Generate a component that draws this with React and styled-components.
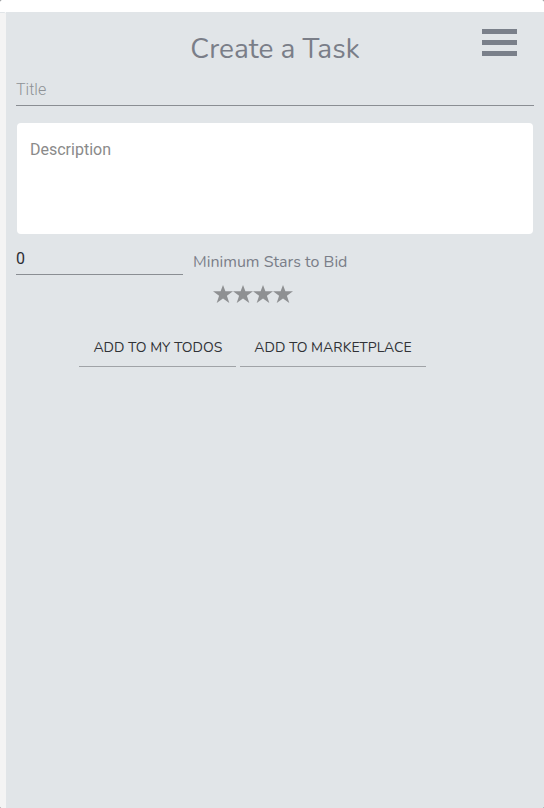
import React, { useState } from "react";
import styled, { createGlobalStyle } from "styled-components";

const GlobalStyle = createGlobalStyle`
  *, *::before, *::after { box-sizing: border-box; }
  body { margin: 0; background: #777b7f; }
`;

const uiFont = `Nunito, Lato, sans-serif`;
const fieldFont = `Roboto, sans-serif`;

const Screen = styled.div`
  display: flex;
  min-height: 100vh;
  padding-top: 12px;
  overflow: hidden;
  border-radius: 2px;
  background: #ffffff;
  font-family: ${uiFont};
  color: #7a7e88;
`;

const Rail = styled.div`
  flex: 0 0 6px;
  border-top: 1px solid #e1e5e8;
  border-top-right-radius: 2px;
  background: #f4f4f4;
`;

const Panel = styled.main`
  flex: 1;
  min-width: 0;
  padding: 16px 10px;
  background: #e1e5e8;
`;

const Header = styled.header`
  display: grid;
  grid-template-columns: 1fr auto 1fr;
  align-items: start;
  padding-right: 17px;
  padding-left: 17px;
`;

const Heading = styled.h1`
  grid-column: 2;
  margin: 4px 0 0;
  font-size: 28px;
  font-weight: 400;
  line-height: 34px;
`;

const MenuButton = styled.button`
  justify-self: end;
  display: flex;
  flex-direction: column;
  gap: 6px;
  padding: 1px 0 0;
  border: 0;
  background: none;
  cursor: pointer;
`;

const MenuBar = styled.span`
  width: 35px;
  height: 5px;
  background: #7a808a;
`;

const Form = styled.form`
  display: flex;
  flex-direction: column;
`;

const LineInput = styled.input`
  display: block;
  width: 100%;
  height: 32px;
  padding: 0;
  border: 0;
  border-bottom: 1px solid #8a8e93;
  border-radius: 0;
  outline: none;
  background: transparent;
  color: #2b2d33;
  font: 400 16px ${fieldFont};

  &::placeholder { color: #8e9296; font-weight: 300; opacity: 1; }
`;

const TitleInput = styled(LineInput)`
  margin-top: 8px;
`;

const Description = styled.textarea`
  display: block;
  height: 111px;
  margin: 17px 1px 0;
  padding: 17px 13px;
  border: 0;
  border-radius: 4px;
  outline: none;
  resize: none;
  background: #ffffff;
  color: #2b2d33;
  font: 400 16px/20px ${fieldFont};

  &::placeholder { color: #8a8a8a; opacity: 1; }
`;

const BidRow = styled.div`
  display: flex;
  align-items: flex-start;
  gap: 10px;
  margin-top: 9px;
`;

const BidAmount = styled.div`
  flex: 0 0 167px;
`;

const Rating = styled.fieldset`
  min-width: 0;
  margin: 0;
  padding: 9px 0 0;
  border: 0;
`;

const RatingLabel = styled.legend`
  float: left;
  width: 100%;
  padding: 0;
  font-size: 16px;
  line-height: 20px;
  white-space: nowrap;
`;

const Stars = styled.div`
  clear: both;
  display: flex;
  padding: 12px 0 0 20px;
`;

const StarLabel = styled.label`
  display: grid;
  width: 20px;
  height: 20px;
  color: ${({ $lit }) => ($lit ? "#f2b632" : "#8e9092")};
  cursor: pointer;

  > * { grid-area: 1 / 1; }
`;

const StarRadio = styled.input`
  width: 20px;
  height: 20px;
  margin: 0;
  opacity: 0;
`;

const Actions = styled.div`
  display: flex;
  flex-wrap: wrap;
  justify-content: center;
  gap: 4px;
  margin-top: 24px;
  padding-right: 45px;
`;

const ActionButton = styled.button`
  padding: 10px 14px 8px;
  border: 0;
  border-bottom: 1px solid #a0a3a7;
  background: transparent;
  color: #303236;
  font-family: ${uiFont};
  font-size: 14px;
  line-height: 20px;
  text-transform: uppercase;
  cursor: pointer;
`;

function Star({ value, rating, onRate }) {
  return (
    <StarLabel $lit={value <= rating}>
      <StarRadio
        type="radio"
        name="stars"
        aria-label={`${value} stars`}
        checked={rating === value}
        onChange={() => onRate(value)}
      />
      <svg width="20" height="20" viewBox="0 0 20 20" aria-hidden="true">
        <path
          fill="currentColor"
          d="M10 1 12.4 7.3H20L13.9 11.7 16.3 19 10 14.5 3.7 19 6.1 11.7 0 7.3H7.6Z"
        />
      </svg>
    </StarLabel>
  );
}

export default function App() {
  const [rating, setRating] = useState(0);
  return (
    <>
      <GlobalStyle />
      <Screen>
        <Rail />
        <Panel>
          <Header>
            <Heading>Create a Task</Heading>
            <MenuButton type="button" aria-label="Open menu">
              <MenuBar />
              <MenuBar />
              <MenuBar />
            </MenuButton>
          </Header>
          <Form onSubmit={(event) => event.preventDefault()}>
            <TitleInput type="text" placeholder="Title" aria-label="Title" />
            <Description placeholder="Description" aria-label="Description" />
            <BidRow>
              <BidAmount>
                <LineInput type="text" inputMode="numeric" defaultValue="0" aria-label="Bid amount" />
              </BidAmount>
              <Rating>
                <RatingLabel>Minimum Stars to Bid</RatingLabel>
                <Stars>
                  {[1, 2, 3, 4].map((value) => (
                    <Star key={value} value={value} rating={rating} onRate={setRating} />
                  ))}
                </Stars>
              </Rating>
            </BidRow>
            <Actions>
              <ActionButton type="button">Add to my todos</ActionButton>
              <ActionButton type="button">Add to marketplace</ActionButton>
            </Actions>
          </Form>
        </Panel>
      </Screen>
    </>
  );
}
